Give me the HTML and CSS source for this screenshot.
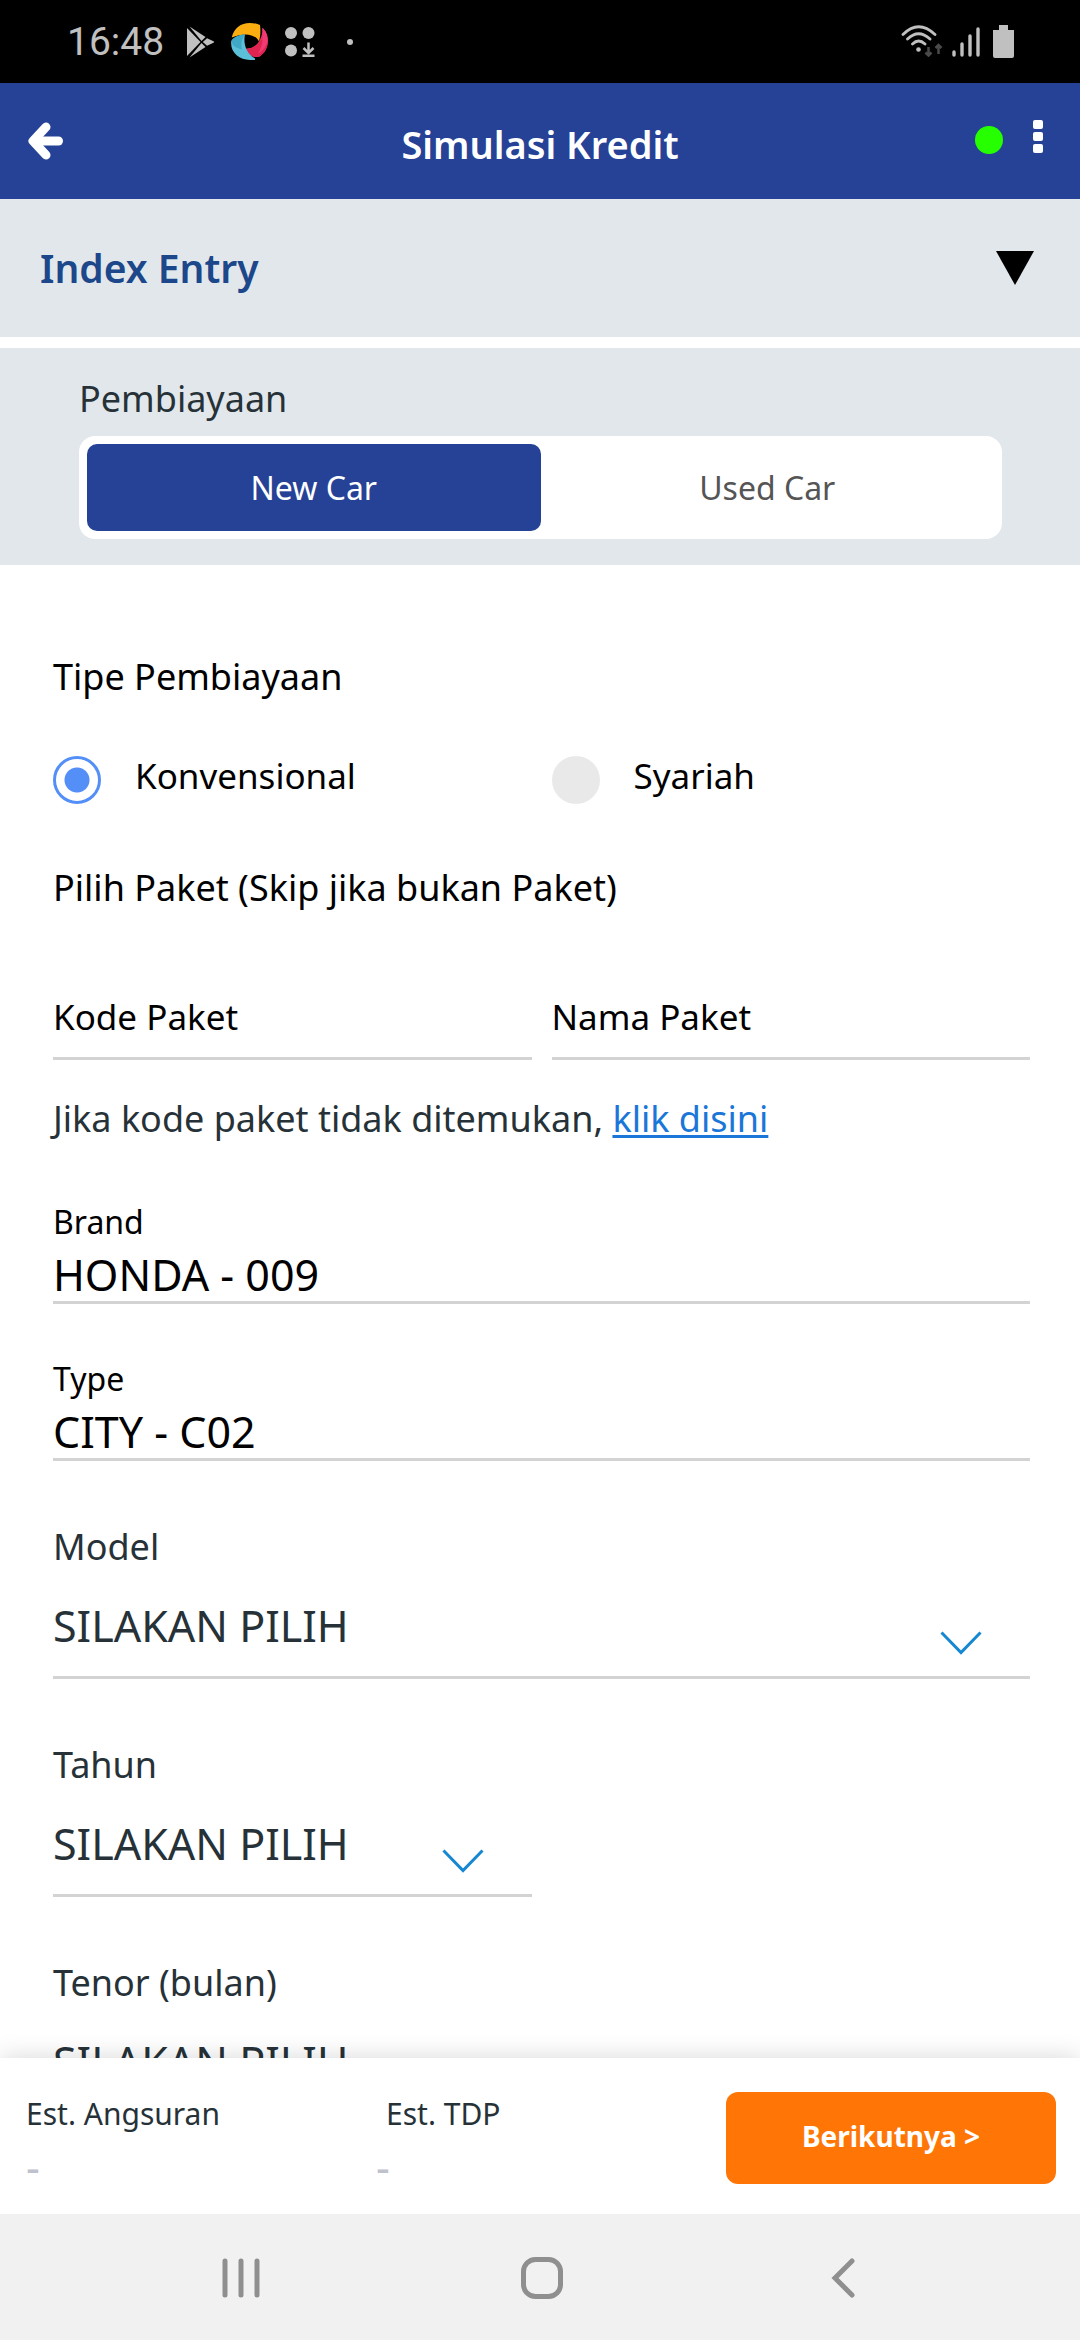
FILE: index.html
```html
<!DOCTYPE html>
<html lang="id">
<head>
<meta charset="utf-8">
<meta name="viewport" content="width=device-width, initial-scale=1">
<title>Simulasi Kredit</title>
<link rel="stylesheet" href="styles.css">
</head>
<body>
<div class="app">
  <div class="status">
    <div class="status-group">
      <span class="clock">16:48</span>
      <svg class="ic-play" width="30" height="32" viewBox="0 0 30 32" fill="#c0c0c0"><path d="M1 2v28L14.500 16z"/><path d="M3.500.500 15.500 15l4-4z"/><path d="M3.500 31.500 15.500 17l4 4z"/><path d="M21 12.300 27.500 15.200q1.500.800 0 1.600L21 19.700 16.800 16z"/></svg>
      <svg class="ic-wheel" width="37" height="37" viewBox="0 0 37 37"><path d="M.7 14.500C3 5 10 0 18.600 0c4 0 8 .8 10.400 2 .8 6 .4 11-1 16.500C25 12 15 8.500.7 14.500z" fill="#fcae10"/><path d="M31.300 4.700C35 8 36.800 12 36.800 18c0 7-3 12-8 15.500-7 2-11.800-2-13.800-7.800C24 26 32 18 31.300 4.700z" fill="#ee2f68"/><path d="M15 25.700c6 .5 12-3 15-9l6.800 1c0 7-3 12-8 15.500-7 2-11.800-1.700-13.800-7.500z" fill="#e02450"/><path d="M31.300 4.700C35 8 36.800 12 36.800 18c-1.500 6-6 11-10 13 5-8 6-17 4.500-26.300z" fill="#f03a72"/><path d="M.2 18.500C2 14.500 7 12 14 11.500c-2 9 1 19 10 24V37h-5C8 37-1 29 .2 18.500z" fill="#5cbfda"/><path d="M.2 18.500C2 14.500 7 12 14 11.500c-4 5-4 10-3 15C4 25 1.500 22 .2 18.500z" fill="#3fa8c6"/></svg>
      <svg class="ic-apps" width="30" height="32" viewBox="0 0 30 32" fill="#c0c0c0"><circle cx="6" cy="7" r="6"/><circle cx="23.500" cy="7" r="6"/><circle cx="6" cy="24.500" r="6"/><path d="M17.500 28.500h12V31h-12z"/><path d="M23.500 16.500v10M18.500 22l5 5 5-5" fill="none" stroke="#c0c0c0" stroke-width="2.500"/></svg>
      <svg width="6" height="6" viewBox="0 0 6 6" fill="#c0c0c0"><circle cx="3" cy="3" r="3"/></svg>
    </div>
    <div class="status-group">
      <svg width="42" height="34" viewBox="0 0 42 34" fill="none" stroke="#c0c0c0" stroke-width="2.800" stroke-linecap="round"><path d="M2 9.500q15.500-15.500 32 0M6.500 14q11-10.500 22.500 0M11.500 19q6-6 12.500 0"/><circle cx="17.500" cy="24.500" r="2.300" fill="#c0c0c0" stroke="none"/><path d="M27.500 22v7.500M24.500 27.500l3 3 3-3M37.500 29v-8M34.500 23l3-3 3 3" stroke="#4a4a4a" stroke-width="2.500" stroke-linecap="butt"/></svg>
      <svg class="ic-signal" width="28" height="32" viewBox="0 0 28 32" stroke="#c0c0c0" stroke-width="3.400" stroke-linecap="round"><path d="M2 26v3M10 18v11M18 10v19M26 3v26"/></svg>
      <svg class="ic-battery" width="21" height="33" viewBox="0 0 21 33" fill="#c0c0c0"><path d="M6 0h9v5h6v26q0 2-2 2H2q-2 0-2-2V5h6z"/></svg>
    </div>
  </div>

  <header class="header">
    <button class="icon-btn" type="button" aria-label="Kembali"><svg width="36" height="38" viewBox="0 0 36 38" fill="none" stroke="#fff" stroke-width="9" stroke-linecap="round" stroke-linejoin="round"><path d="M19 5 6 19l13 14"/><path d="M9 19h22.500"/></svg></button>
    <h1 class="title">Simulasi Kredit</h1>
    <div class="header-end">
      <span class="online"></span>
      <button class="icon-btn" type="button" aria-label="Menu"><svg width="10" height="34" viewBox="0 0 10 34" fill="#fff"><rect width="10" height="9" rx="2"/><rect y="12" width="10" height="9" rx="2"/><rect y="24" width="10" height="9" rx="2"/></svg></button>
    </div>
  </header>

  <main class="content">
    <button class="accordion" type="button">
      <span>Index Entry</span>
      <svg width="38" height="34" viewBox="0 0 38 34"><path d="M0 0h38L19 34z"/></svg>
    </button>

    <section class="financing">
      <h2 class="label">Pembiayaan</h2>
      <div class="toggle">
        <button class="toggle-item active" type="button">New Car</button>
        <button class="toggle-item" type="button">Used Car</button>
      </div>
    </section>

    <form class="form">
      <p class="label dark">Tipe Pembiayaan</p>
      <div class="columns radios">
        <label class="radio"><input type="radio" name="tipe" checked><span>Konvensional</span></label>
        <label class="radio"><input type="radio" name="tipe"><span>Syariah</span></label>
      </div>
      <p class="label dark">Pilih Paket (Skip jika bukan Paket)</p>
      <div class="columns packages">
        <input class="package" type="text" placeholder="Kode Paket" aria-label="Kode Paket">
        <input class="package" type="text" placeholder="Nama Paket" aria-label="Nama Paket">
      </div>
      <p class="label hint">Jika kode paket tidak ditemukan, <a class="link" href="#">klik disini</a></p>

      <div class="field">
        <label class="field-label" for="brand">Brand</label>
        <input class="value" id="brand" type="text" value="HONDA - 009">
      </div>
      <div class="field">
        <label class="field-label" for="type">Type</label>
        <input class="value" id="type" type="text" value="CITY - C02">
      </div>

      <div class="picker">
        <label class="label" for="model">Model</label>
        <div class="select-box">
          <select class="select" id="model"><option>SILAKAN PILIH</option></select>
          <svg class="chevron" width="42" height="24" viewBox="0 0 42 24"><path d="m1.500 1.500 19.500 20 19.500-20"/></svg>
        </div>
      </div>
      <div class="columns">
        <div class="picker">
          <label class="label" for="tahun">Tahun</label>
          <div class="select-box">
            <select class="select" id="tahun"><option>SILAKAN PILIH</option></select>
            <svg class="chevron" width="42" height="24" viewBox="0 0 42 24"><path d="m1.500 1.500 19.500 20 19.500-20"/></svg>
          </div>
        </div>
      </div>
      <div class="columns">
        <div class="picker">
          <label class="label" for="tenor">Tenor (bulan)</label>
          <div class="select-box">
            <select class="select" id="tenor"><option>SILAKAN PILIH</option></select>
            <svg class="chevron" width="42" height="24" viewBox="0 0 42 24"><path d="m1.500 1.500 19.500 20 19.500-20"/></svg>
          </div>
        </div>
      </div>
    </form>
  </main>

  <footer class="summary">
    <dl class="estimates">
      <div><dt>Est. Angsuran</dt><dd>-</dd></div>
      <div><dt class="indent">Est. TDP</dt><dd>-</dd></div>
    </dl>
    <button class="next" type="button">Berikutnya &gt;</button>
  </footer>

  <nav class="navbar">
    <button class="icon-btn" type="button" aria-label="Aplikasi terbaru"><svg width="38" height="40" viewBox="0 0 38 40" stroke="#8f8f8f" stroke-width="5" stroke-linecap="round"><path d="M3 3v34M19 3v34M35 3v34"/></svg></button>
    <button class="icon-btn" type="button" aria-label="Beranda"><svg width="42" height="42" viewBox="0 0 42 42" fill="none" stroke="#8f8f8f" stroke-width="5"><rect x="2.500" y="2.500" width="37" height="37" rx="12"/></svg></button>
    <button class="icon-btn" type="button" aria-label="Kembali ke layar sebelumnya"><svg width="24" height="40" viewBox="0 0 24 40" fill="none" stroke="#8f8f8f" stroke-width="5" stroke-linecap="round"><path d="M21 3 4 20l17 17"/></svg></button>
  </nav>
</div>
</body>
</html>
```
FILE: styles.css
```css
* { box-sizing: border-box; }

body {
  margin: 0;
  font-family: "Noto Sans", "Open Sans", sans-serif;
  color: #263238;
  background: #fff;
}

h1, h2, p, dl, dd { margin: 0; font-weight: 400; }

button, input, select {
  font: inherit;
  color: inherit;
  border: 0;
  border-radius: 0;
  padding: 0;
  margin: 0;
  background: none;
  outline: 0;
}

svg { display: block; flex: none; }

.app { display: flex; flex-direction: column; height: 100vh; }
.icon-btn { display: flex; }

/* System status bar */
.status {
  display: flex;
  justify-content: space-between;
  align-items: center;
  height: 83px;
  padding: 0 66px 0 67px;
  background: #000;
}
.status-group { display: flex; align-items: center; }
.clock { font: 39px/44px Roboto, sans-serif; color: #c0c0c0; }
.ic-play { margin-left: 22px; }
.ic-wheel { margin-left: 15px; }
.ic-apps { margin: 0 32px 0 17px; }
.ic-signal { margin: 0 13px 0 9px; }

/* App header */
.header {
  display: grid;
  grid-template-columns: 1fr auto 1fr;
  align-items: center;
  height: 116px;
  padding: 0 27px;
  background: #254296;
  color: #fff;
  flex: none;
}
.title { font-size: 38px; line-height: 60px; font-weight: 600; padding-top: 6px; }
.header-end { display: flex; justify-content: flex-end; align-items: flex-end; gap: 30px; padding: 0 10px 8px 0; }
.online { width: 28px; height: 28px; border-radius: 50%; background: #26ff00; }

.content { flex: 1; min-height: 0; overflow-y: auto; scrollbar-width: none; }

.accordion {
  display: flex;
  justify-content: space-between;
  align-items: center;
  width: 100%;
  height: 138px;
  padding: 0 46px 0 40px;
  background: #e2e7eb;
  color: #1c478a;
  font-size: 39px;
  line-height: 56px;
  font-weight: 600;
}
.accordion svg { fill: #000; }

.financing { margin-top: 11px; padding: 27px 78px 26px 79px; background: #e2e7eb; }

.label { display: block; font-size: 36px; line-height: 48px; }
.dark { color: #000; }

.toggle {
  display: grid;
  grid-template-columns: 1fr 1fr;
  margin-top: 13px;
  padding: 8px;
  border-radius: 16px;
  background: #fff;
}
.toggle-item { height: 87px; border-radius: 10px; font-size: 32px; line-height: 44px; color: #555; }
.active { background: #254296; color: #fff; }

/* Form */
.form { padding: 88px 50px 60px 53px; }
.columns { display: grid; grid-template-columns: 1fr 1fr; column-gap: 20px; }

.radios { margin: 55px 0 60px; }
.radio { display: flex; gap: 34px; height: 48px; font-size: 35px; line-height: 40px; color: #000; }
.radio input {
  appearance: none;
  flex: none;
  width: 48px;
  height: 48px;
  border-radius: 50%;
  background: #e9e9e9;
}
.radio input:checked {
  border: 3px solid #548ff7;
  background: radial-gradient(circle, #548ff7 12px, #fff 13px);
}

.packages { margin-top: 80px; }
.package {
  width: 100%;
  height: 68px;
  padding-bottom: 17px;
  border-bottom: 3px solid #d3d3d3;
  font-size: 35px;
  line-height: 48px;
  color: #000;
}
.package::placeholder { color: #000; opacity: 1; }

.hint { margin: 35px 0 57px; }
.link { color: #1a76d8; text-decoration-thickness: 3px; text-underline-offset: 3px; text-decoration-skip-ink: none; }

.field { display: grid; row-gap: 3px; margin-bottom: 53px; color: #000; }
.field-label { font-size: 32px; line-height: 44px; }
.value { width: 100%; height: 57px; border-bottom: 3px solid #d3d3d3; font-size: 43px; line-height: 54px; }

.picker { padding-top: 9px; margin-bottom: 53px; }
.select-box { display: grid; margin-top: 28px; border-bottom: 3px solid #d3d3d3; }
.select {
  grid-area: 1 / 1;
  appearance: none;
  width: 100%;
  height: 77px;
  padding-bottom: 23px;
  font-size: 43px;
  line-height: 54px;
}
.chevron {
  grid-area: 1 / 1;
  place-self: end;
  margin: 0 48px 21px 0;
  fill: none;
  stroke: #1687d1;
  stroke-width: 3;
  pointer-events: none;
}

/* Bottom summary */
.summary {
  display: flex;
  justify-content: space-between;
  align-items: flex-start;
  height: 156px;
  padding: 34px 24px 0 26px;
  background: #fff;
  box-shadow: 0 0 24px rgba(0, 0, 0, .16);
  position: relative;
  flex: none;
}
.estimates { display: grid; grid-template-columns: 1fr 1fr; flex: 1; }
.estimates dt { font-size: 30px; line-height: 44px; }
.estimates .indent { padding-left: 10px; }
.estimates dd { font-size: 43px; line-height: 62px; color: #bfc1cd; }
.next {
  width: 330px;
  height: 92px;
  padding-bottom: 4px;
  border-radius: 12px;
  background: #ff7606;
  color: #fff;
  font-size: 28px;
  line-height: 40px;
  font-weight: 700;
}

/* System navigation bar */
.navbar {
  position: relative;
  display: grid;
  grid-template-columns: repeat(3, 1fr);
  place-items: center;
  height: 126px;
  padding: 2px 86px 0 90px;
  background: #f1f1f1;
  flex: none;
}
```
